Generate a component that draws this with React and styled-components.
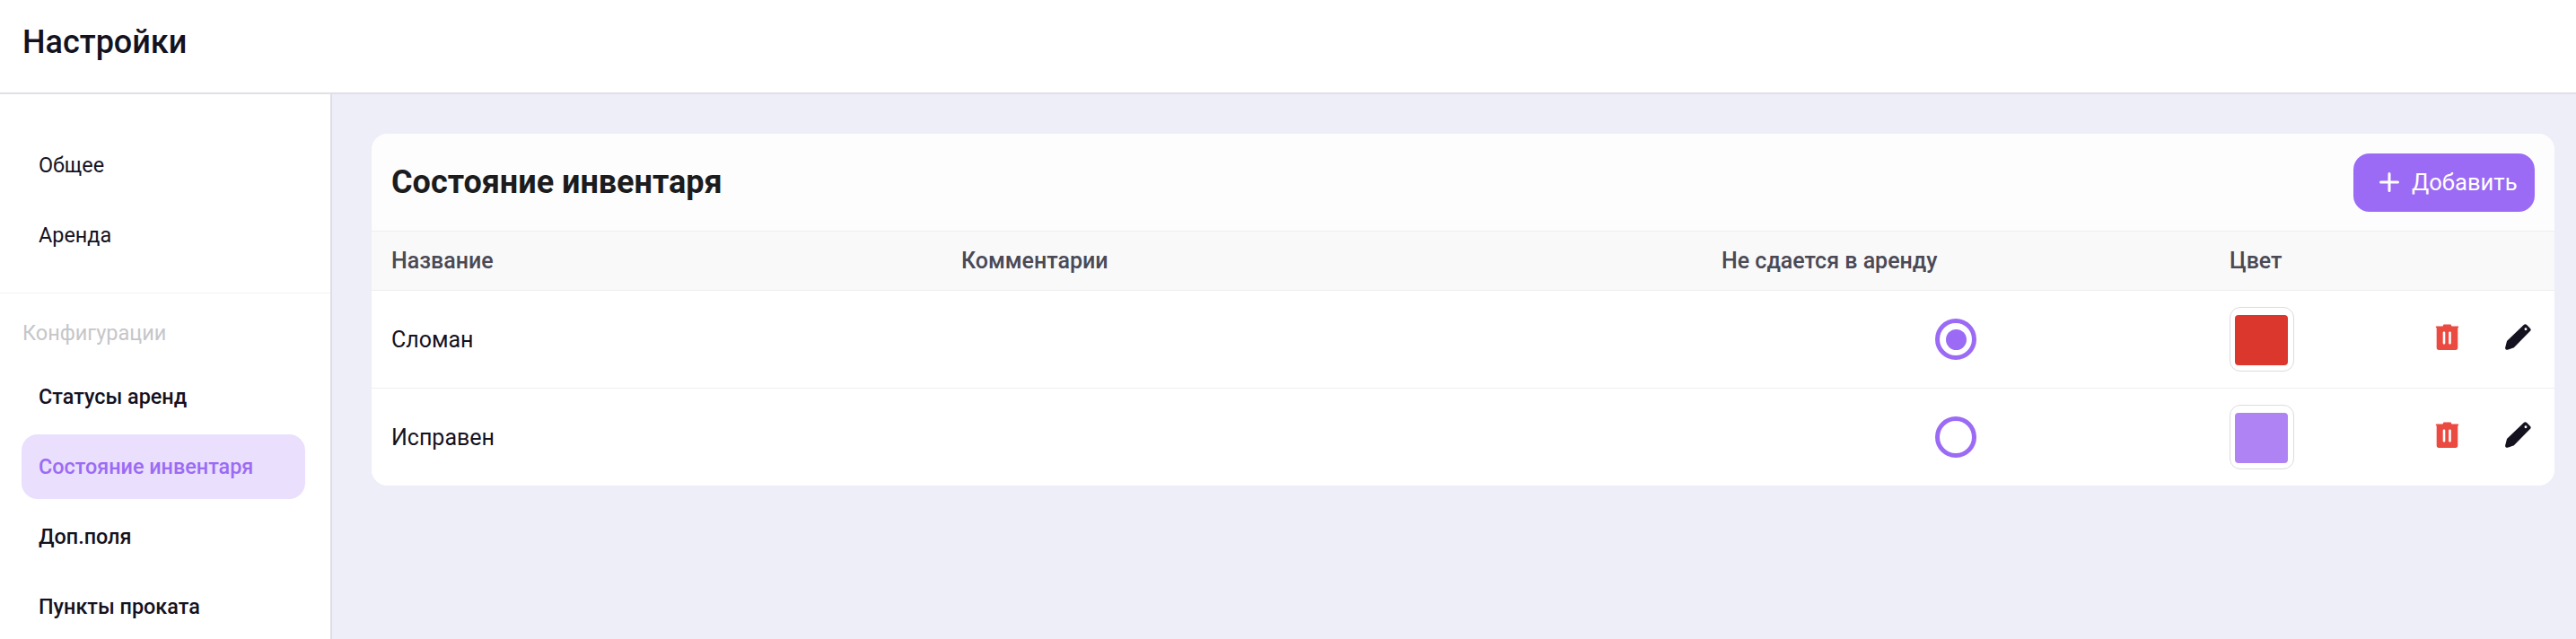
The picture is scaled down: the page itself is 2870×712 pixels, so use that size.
import styled, { createGlobalStyle } from "styled-components";

const GlobalStyle = createGlobalStyle`
  * {
    box-sizing: border-box;
  }
  html,
  body {
    margin: 0;
    height: 100%;
    overflow: hidden;
    background: #edeef7;
    font-family: Roboto, "Noto Sans", sans-serif;
  }
`;

const Page = styled.div`
  display: flex;
  flex-direction: column;
  height: 712px;
`;

const TopBar = styled.header`
  flex: none;
  height: 105px;
  display: flex;
  align-items: center;
  padding: 0 0 9px 25px;
  background: #fff;
  border-bottom: 2px solid #e0e0e6;
`;

const PageTitle = styled.h1`
  margin: 0;
  font-size: 36px;
  font-weight: 500;
  color: #14121f;
`;

const Body = styled.div`
  flex: 1;
  display: flex;
  min-height: 0;
`;

const Sidebar = styled.aside`
  flex: none;
  width: 370px;
  background: #fff;
  border-right: 2px solid #dedee4;
  overflow: hidden;
`;

const NavGroup = styled.nav`
  display: flex;
  flex-direction: column;
  gap: 6px;
  padding: ${(props) => (props.$divided ? "43px 28px 28px 24px" : "21px 28px 28px 24px")};
  border-bottom: ${(props) => (props.$divided ? "1px solid #f3f3f5" : "none")};
`;

const GroupLabel = styled.div`
  padding: 30px 0 0 25px;
  font-size: 23.5px;
  line-height: 28px;
  color: #c6c6c9;
`;

const NavItem = styled.a`
  display: flex;
  align-items: center;
  flex: none;
  height: 72px;
  padding-left: 19px;
  border-radius: 18px;
  font-size: 23.4px;
  font-weight: ${(props) => (props.$strong ? 500 : 400)};
  color: ${(props) => (props.$active ? "#9b6bf5" : "#14121f")};
  background: ${(props) => (props.$active ? "#eadffc" : "transparent")};
`;

const Content = styled.main`
  flex: 1;
  padding: 44px 24px 0 44px;
`;

const Card = styled.section`
  border-radius: 18px;
  background: #fff;
  overflow: hidden;
`;

const CardHeader = styled.div`
  height: 109px;
  display: flex;
  align-items: center;
  justify-content: space-between;
  padding: 0 22px;
  background: #fdfdfd;
  border-bottom: 1px solid #eeeef0;
`;

const CardTitle = styled.h2`
  margin: 0;
  font-size: 36px;
  font-weight: 700;
  color: #1c1c1e;
`;

const AddButton = styled.button`
  display: flex;
  align-items: center;
  gap: 14px;
  width: 202px;
  height: 65px;
  padding: 0 0 0 29px;
  border: 0;
  border-radius: 18px;
  background: #9b6bf5;
  color: #fff;
  font-family: inherit;
  font-size: 25.6px;
`;

const TableRow = styled.div`
  display: grid;
  grid-template-columns: 635px 847px 566px 1fr;
  align-items: center;
  height: ${(props) => props.$height}px;
  padding-left: 22px;
  background: ${(props) => props.$bg || "#fff"};
  border-bottom: ${(props) => (props.$last ? "none" : "1px solid #eeeef0")};
`;

const HeadCell = styled.div`
  font-size: 25px;
  font-weight: 500;
  color: #4a4955;
`;

const NameCell = styled.div`
  font-size: 25px;
  color: #14121f;
`;

const RadioCell = styled.div`
  padding-left: 238px;
`;

const Radio = styled.span`
  display: flex;
  align-items: center;
  justify-content: center;
  width: 46px;
  height: 46px;
  border: 5px solid #9b6bf5;
  border-radius: 50%;

  &::after {
    content: "";
    display: ${(props) => (props.$checked ? "block" : "none")};
    width: 23px;
    height: 23px;
    border-radius: 50%;
    background: #9b6bf5;
  }
`;

const ColorCell = styled.div`
  display: flex;
  align-items: center;
  justify-content: space-between;
  padding-right: 26px;
`;

const Swatch = styled.div`
  width: 72px;
  height: 72px;
  padding: 8px 6px 6px 5px;
  border: 1px solid #dcdce0;
  border-radius: 12px;
`;

const SwatchFill = styled.div`
  height: 100%;
  border-radius: 4px;
  background: ${(props) => props.$color};
`;

const Actions = styled.div`
  display: flex;
  align-items: center;
  gap: 51px;
  margin-bottom: 6px;
`;

const PlusIcon = () => (
  <svg width="22" height="22" viewBox="0 0 22 22" fill="none" stroke="#fff" strokeWidth="3" strokeLinecap="round">
    <path d="M11 1.5v19M1.5 11h19" />
  </svg>
);

const TrashIcon = () => (
  <svg width="27" height="29" viewBox="0 0 27 29">
    <path
      fill="#ea4a40"
      fillRule="evenodd"
      d="M9.500 .5h8l1 2h7.200c.6 0 .8.9.2 1.300l-.6.9v21.800c0 1.400-1 2.500-2.400 2.500H4.100c-1.400 0-2.400-1.100-2.400-2.500V4.700l-.6-.9c-.6-.4-.4-1.300.2-1.300h7.200zM10 8.500c-.8 0-1.300.5-1.300 1.300v11.400c0 .8.5 1.300 1.300 1.300s1.300-.5 1.300-1.300V9.800c0-.8-.5-1.300-1.300-1.300zM16.500 8.500c-.8 0-1.300.5-1.300 1.300v11.400c0 .8.5 1.300 1.300 1.300s1.300-.5 1.300-1.300V9.800c0-.8-.5-1.300-1.300-1.300z"
    />
  </svg>
);

const PencilIcon = () => (
  <svg width="29" height="29" viewBox="0 0 28 28">
    <path
      fill="#14121f"
      fillRule="evenodd"
      d="M20.300 .8c.8-.8 2-.8 2.800 0l4 4c.8.8.8 2 0 2.800L10 24.800c-.5.5-1 .8-1.700 1l-5.800 2c-1.500.2-2.600-1-2.400-2.300l1.600-6.200c.2-.6.4-1.100.9-1.600zM22.200 4.200a1.400 1.400 0 1 0 0 2.800 1.400 1.400 0 0 0 0-2.800z"
    />
  </svg>
);

const items = [
  { id: 1, name: "Сломан", broken: true, color: "#dc372d", height: 109 },
  { id: 2, name: "Исправен", broken: false, color: "#b083f5", height: 108 },
];

export default function App() {
  return (
    <Page>
      <GlobalStyle />
      <TopBar>
        <PageTitle>Настройки</PageTitle>
      </TopBar>
      <Body>
        <Sidebar>
          <NavGroup $divided>
            <NavItem>Общее</NavItem>
            <NavItem>Аренда</NavItem>
          </NavGroup>
          <GroupLabel>Конфигурации</GroupLabel>
          <NavGroup>
            <NavItem $strong>Статусы аренд</NavItem>
            <NavItem $strong $active>
              Состояние инвентаря
            </NavItem>
            <NavItem $strong>Доп.поля</NavItem>
            <NavItem $strong>Пункты проката</NavItem>
          </NavGroup>
        </Sidebar>
        <Content>
          <Card>
            <CardHeader>
              <CardTitle>Состояние инвентаря</CardTitle>
              <AddButton>
                <PlusIcon />
                Добавить
              </AddButton>
            </CardHeader>
            <TableRow $height={66} $bg="#f9f9fa">
              <HeadCell>Название</HeadCell>
              <HeadCell>Комментарии</HeadCell>
              <HeadCell>Не сдается в аренду</HeadCell>
              <HeadCell>Цвет</HeadCell>
            </TableRow>
            {items.map((item, i) => (
              <TableRow key={item.id} $height={item.height} $last={i === items.length - 1}>
                <NameCell>{item.name}</NameCell>
                <div />
                <RadioCell>
                  <Radio $checked={item.broken} />
                </RadioCell>
                <ColorCell>
                  <Swatch>
                    <SwatchFill $color={item.color} />
                  </Swatch>
                  <Actions>
                    <TrashIcon />
                    <PencilIcon />
                  </Actions>
                </ColorCell>
              </TableRow>
            ))}
          </Card>
        </Content>
      </Body>
    </Page>
  );
}
